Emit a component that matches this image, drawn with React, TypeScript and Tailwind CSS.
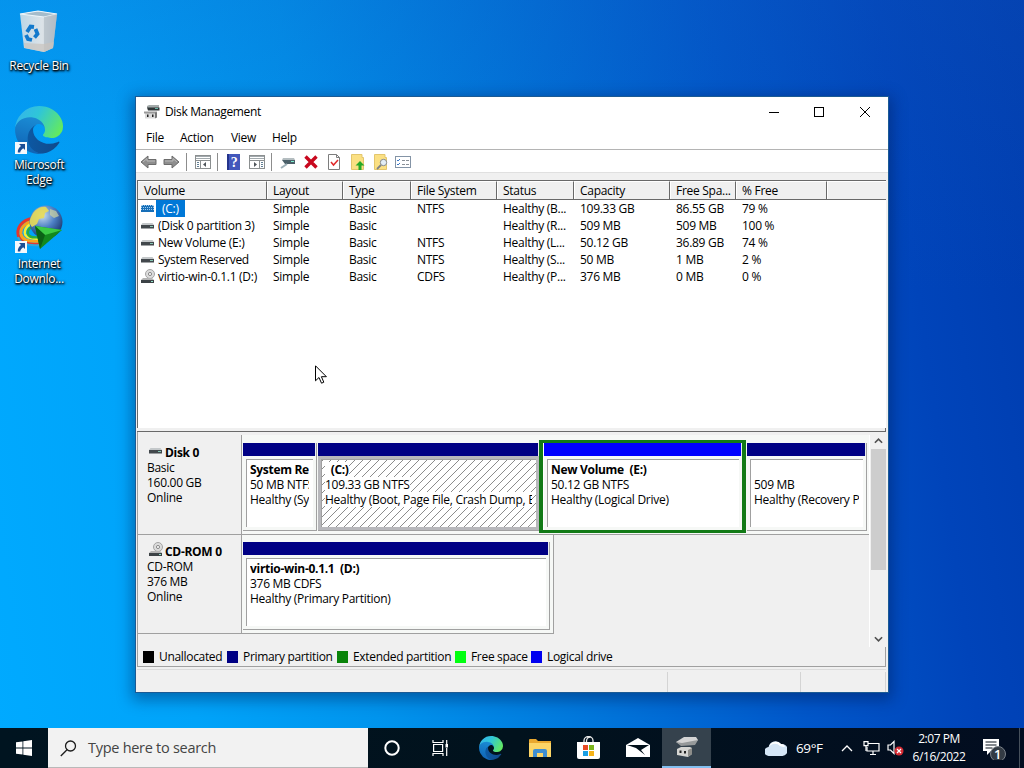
import type { ReactNode } from "react";
import clsx from "clsx";

interface Volume {
  name: string;
  layout: string;
  type: string;
  fs: string;
  status: string;
  capacity: string;
  free: string;
  percent: string;
  icon: "selected" | "disk" | "cd";
}

const volumes: Volume[] = [
  { name: "(C:)", layout: "Simple", type: "Basic", fs: "NTFS", status: "Healthy (B...", capacity: "109.33 GB", free: "86.55 GB", percent: "79 %", icon: "selected" },
  { name: "(Disk 0 partition 3)", layout: "Simple", type: "Basic", fs: "", status: "Healthy (R...", capacity: "509 MB", free: "509 MB", percent: "100 %", icon: "disk" },
  { name: "New Volume (E:)", layout: "Simple", type: "Basic", fs: "NTFS", status: "Healthy (L...", capacity: "50.12 GB", free: "36.89 GB", percent: "74 %", icon: "disk" },
  { name: "System Reserved", layout: "Simple", type: "Basic", fs: "NTFS", status: "Healthy (S...", capacity: "50 MB", free: "1 MB", percent: "2 %", icon: "disk" },
  { name: "virtio-win-0.1.1 (D:)", layout: "Simple", type: "Basic", fs: "CDFS", status: "Healthy (P...", capacity: "376 MB", free: "0 MB", percent: "0 %", icon: "cd" },
];

const columns = ["Volume", "Layout", "Type", "File System", "Status", "Capacity", "Free Spa...", "% Free", ""];

const gridCols = "grid grid-cols-[129px_76px_68px_86px_77px_96px_66px_91px_1fr]";

const legend = [
  { label: "Unallocated", color: "bg-black", width: "w-[84px]" },
  { label: "Primary partition", color: "bg-[#000084]", width: "w-[110px]" },
  { label: "Extended partition", color: "bg-[#0a840a]", width: "w-[118px]" },
  { label: "Free space", color: "bg-[#00ff10]", width: "w-[76px]" },
  { label: "Logical drive", color: "bg-[#0000f0]", width: "w-[90px]" },
];

const EdgeLogo = ({ id, className }: { id: string; className?: string }) => (
  <svg viewBox="0 0 256 256" className={className}>
    <defs>
      <linearGradient id={`${id}a`} x1="0" y1="0.5" x2="1" y2="0.6">
        <stop offset="0" stopColor="#0c59a4" />
        <stop offset="1" stopColor="#114a8b" />
      </linearGradient>
      <linearGradient id={`${id}b`} x1="0.6" y1="0" x2="0.4" y2="1">
        <stop offset="0" stopColor="#1b8ed6" />
        <stop offset="1" stopColor="#0f62b4" />
      </linearGradient>
      <linearGradient id={`${id}c`} x1="0" y1="0.3" x2="1" y2="0.7">
        <stop offset="0" stopColor="#35b5ea" />
        <stop offset="0.4" stopColor="#2fc6d8" />
        <stop offset="1" stopColor="#66eb5a" />
      </linearGradient>
    </defs>
    <path d="M231 190.500c-3.400 1.800-6.900 3.400-10.500 4.700a101 101 0 0 1-35.900 6.500c-47.300 0-88.500-32.500-88.500-74.300 0-11.400 6.400-22 16.400-27.400-42.800 1.800-53.800 46.400-53.800 72.500 0 74 68.100 81.400 82.800 81.400 7.900 0 19.800-2.300 27-4.600l1.300-.4a128 128 0 0 0 66.600-52.800 4 4 0 0 0-5.400-5.600Z" fill={`url(#${id}a)`} />
    <path d="M105.700 241.400a79.200 79.200 0 0 1-22.700-21.300 80.700 80.700 0 0 1 29.500-120c3.200-1.500 8.500-4.100 15.600-4 10.200.1 19.800 5 25.900 13.100 4 5.300 6.300 11.800 6.300 18.700 0-.2 24.500-79.600-80-79.600-43.900 0-80 41.600-80 78.200 0 19.300 4.500 38.400 12.500 56a128 128 0 0 0 156.400 67.100 75.500 75.500 0 0 1-62.800-8.100Z" fill={`url(#${id}b)`} />
    <path d="M152.300 148.900c-.9 1-3.400 2.500-3.400 5.600 0 2.600 1.700 5.200 4.800 7.300 14.400 10 41.500 8.700 41.600 8.700 10.700 0 21.100-2.900 30.300-8.300A61.400 61.400 0 0 0 256 109.200c.3-22.400-8-37.300-11.300-43.900C223.500 23.900 177.700 0 128 0A128 128 0 0 0 0 126.200c.5-36.500 36.800-66 80-66 3.500 0 23.500.3 42 10.100 16.300 8.600 24.900 18.900 30.800 29.200 6.200 10.700 7.300 24.100 7.300 29.500s-2.700 13.300-7.800 19.900Z" fill={`url(#${id}c)`} />
  </svg>
);

const ShortcutArrow = () => (
  <svg viewBox="0 0 12 12" className="absolute bottom-0 left-0 h-3 w-3">
    <rect width="12" height="12" fill="#f4f8fc" />
    <path d="M4 2h6v6L8.200 6.200C6.500 7.400 5.400 8.700 5.200 10.500H2.800C2.600 7.600 4 5.500 6 4Z" fill="#1c4f96" />
  </svg>
);

const RecycleBin = () => (
  <svg viewBox="0 0 40 44" className="h-11 w-10">
    <defs>
      <linearGradient id="bin" x1="0" x2="1">
        <stop offset="0" stopColor="#bcd6e6" />
        <stop offset="0.600" stopColor="#dce3e8" />
        <stop offset="1" stopColor="#a9b7c4" />
      </linearGradient>
    </defs>
    <path d="M1 5 19 2l19 3-4 34-9 4L5 39Z" fill="url(#bin)" />
    <path d="M1 5 19 2l19 3-13 3Z" fill="#a5bccb" stroke="#eef6fb" strokeWidth="1.200" />
    <path d="M25 8 38 5l-4 34-9 4Z" fill="#b4bdc6" opacity="0.700" />
    <path d="m5 34 .5 5L25 43l9-4 .8-6-10 2Z" fill="#c9c3bd" opacity="0.700" />
    <g fill="none" stroke="#1279cc" strokeWidth="3.800">
      <path d="m8 23 3.500-5.500 3.500.5" />
      <path d="m16.500 20 2 5-3 3.500" />
      <path d="M13 31 9 30l-2-4" />
    </g>
  </svg>
);

const DownloadGlobe = () => (
  <svg viewBox="0 0 48 46" className="h-[46px] w-12">
    <defs>
      <radialGradient id="globe" cx="0.4" cy="0.3" r="0.750">
        <stop offset="0" stopColor="#c9def0" />
        <stop offset="0.500" stopColor="#4c7fc4" />
        <stop offset="1" stopColor="#173065" />
      </radialGradient>
    </defs>
    <path d="M22 13C10 13 2 20 3 29c1 7 8 11 22 10" fill="none" stroke="#e9362c" strokeWidth="3" />
    <path d="M22 16c-10 0-17 6-16 13 1 6 8 8 19 7" fill="none" stroke="#f9a21b" strokeWidth="3" />
    <path d="M22 18c-8 0-13 5-12 11 1 4 7 5 15 5" fill="none" stroke="#f5ef33" strokeWidth="2.500" />
    <path d="M22 21c-6 0-10 3-9 8 1 3 5 4 12 3" fill="none" stroke="#2cae3e" strokeWidth="2.500" />
    <path d="M3 32c2 6 10 9 22 8" fill="none" stroke="#35a7d8" strokeWidth="2" />
    <circle cx="31" cy="17" r="16.500" fill="url(#globe)" />
    <path d="M17 10c3-6 9-9 14-8l3 4-4 2-1 5-5 1-2 5-5 3c-3-3-3-7 0-12Z" fill="#e9dc55" opacity="0.900" />
    <path d="m35 4 6 2 3 5-5 2-4-3Z" fill="#cfd4a0" opacity="0.700" />
    <path d="m20 21 27 4-22 19Z" fill="#13891e" />
    <path d="m20 21 27 4-17 5Z" fill="#3ccb45" />
    <path d="m20 21 10 9-5 14Z" fill="#0b6116" />
  </svg>
);

const DiskIcon = ({ kind, className }: { kind: Volume["icon"]; className?: string }) => (
  <svg viewBox="0 0 16 16" className={clsx("h-4 w-4 shrink-0", className)}>
    {kind === "cd" && (
      <>
        <circle cx="10" cy="5" r="4.500" fill="#dcdcdc" stroke="#a4a4a4" />
        <circle cx="10" cy="5" r="1.600" fill="#f4f4f4" stroke="#8c8c8c" />
        <path d="M3 9h9l2 2H1Z" fill="#b4b4b4" />
        <rect x="1" y="11" width="13" height="3" fill="#3c4246" />
        <rect x="11" y="12" width="2" height="1" fill="#8fe0c8" />
      </>
    )}
    {kind === "disk" && (
      <>
        <path d="M2.500 5h10l1.500 2H1Z" fill="#c4c8ca" />
        <rect x="1" y="7" width="13" height="3.500" fill="#42484c" />
        <rect x="10" y="8" width="3" height="1" fill="#86c7b4" />
      </>
    )}
    {kind === "selected" && (
      <>
        <path d="M2 4h11l1 2v5H1V6Z" fill="#176fb8" />
        <path d="M2 4.500h12M1 6.500h13M1 8.500h13" stroke="#9dccf0" strokeDasharray="1 1" />
      </>
    )}
  </svg>
);

const MgmtIcon = ({ className }: { className?: string }) => (
  <svg viewBox="0 0 16 16" className={className}>
    <path d="m3 2 2-1h10v3H3Z" fill="#a3aaaa" />
    <path d="M3 3.500h12.500v3H4Z" fill="#303638" />
    <rect x="11" y="4" width="3" height="1" fill="#67b7a6" />
    <path d="M1 9h10v5.500H1Z" fill="#dadada" />
    <path d="M0 7.500h13v2H0Z" fill="#9a9a9a" />
    <path d="M3 10.500h1.500v2.500H3Zm5 0h1.500v2.500H8Z" fill="#222" />
    <path d="M11 8.500h2v5l-2 1Z" fill="#777" />
  </svg>
);

const PaneIcon = ({ flip }: { flip?: boolean }) => (
  <svg viewBox="0 0 16 14" className="h-3.5 w-4">
    <rect x="0.500" y="0.500" width="15" height="13" fill="#fff" stroke="#8b8f90" />
    <path d="M1 1.500h14M1 3.500h14" stroke="#a2aaae" />
    <path d={flip ? "M10.500 5v8.500M1 5.500h14" : "M5.500 5v8.500M1 5.500h14"} stroke="#8b8f90" />
    <path d={flip ? "M12 7.500h2M12 9.500h2M12 11.500h2" : "M2 7.500h2M2 9.500h2M2 11.500h2"} stroke="#617f95" />
    <path d={flip ? "m5 7 3 2.500-3 2.500Z" : "m11 7-3 2.500 3 2.500Z"} fill="#4f555a" />
  </svg>
);

const ArrowIcon = ({ right }: { right?: boolean }) => (
  <svg viewBox="0 0 17 14" className={clsx("h-3.5 w-[17px]", right && "-scale-x-100")}>
    <path d="m1 7 7-6v3.500h8v5H8V13Z" fill="#8e8e8e" stroke="#6c6c6c" strokeLinejoin="round" />
    <path d="m3 7 4-3.500V6h8" fill="none" stroke="#b9b9b9" />
  </svg>
);

const Separator = () => <div className="h-[18px] w-px bg-[#8d8d8d]" />;

const Toolbar = () => (
  <div className="flex h-[23px] shrink-0 items-center border-t border-[#b4b4b4] bg-white pl-[4px] pt-[2px]">
    <ArrowIcon />
    <div className="w-[6px]" />
    <ArrowIcon right />
    <div className="w-[6px]" />
    <Separator />
    <div className="w-[8px]" />
    <PaneIcon />
    <div className="w-[6px]" />
    <Separator />
    <div className="w-[9px]" />
    <svg viewBox="0 0 13 16" className="h-4 w-[13px]">
      <rect width="13" height="16" fill="#4357bb" />
      <rect width="2" height="16" fill="#24348c" />
      <text x="7" y="13" textAnchor="middle" className="fill-white font-['Liberation_Serif',serif] text-[14px] font-bold">?</text>
    </svg>
    <div className="w-[9px]" />
    <PaneIcon flip />
    <div className="w-[6px]" />
    <Separator />
    <div className="w-[8px]" />
    <svg viewBox="0 0 16 14" className="h-3.5 w-4">
      <path d="M3 3h11l1 2H2Z" fill="#b4bdc0" />
      <path d="M2 5h13v4H5Z" fill="#4b6069" />
      <path d="M11 6h3v1h-3Z" fill="#7cf0cf" />
      <path d="m1 13 6-4" stroke="#9db0b8" strokeWidth="2" />
    </svg>
    <div className="w-[8px]" />
    <svg viewBox="0 0 14 14" className="h-3.5 w-3.5">
      <path d="m1.500 1.500 11 11m0-11-11 11" stroke="#c8081e" strokeWidth="3.400" />
    </svg>
    <div className="w-[10px]" />
    <svg viewBox="0 0 12 16" className="h-4 w-3">
      <path d="M.5.5h8l3 3v12H.5Z" fill="#fff" stroke="#7d7d7d" />
      <path d="M8.500.5v3h3" fill="none" stroke="#7d7d7d" />
      <path d="m3 8 2.500 3L10 6" fill="none" stroke="#e02a2a" strokeWidth="1.500" />
    </svg>
    <div className="w-[11px]" />
    <svg viewBox="0 0 14 16" className="h-4 w-3.5">
      <path d="M.5.5h10.500v3h1.500v12H.5Z" fill="#fbe083" stroke="#e3c66c" />
      <path d="m9 7 4.500 4.500h-3V16h-3v-4.500h-3Z" fill="#27a927" />
    </svg>
    <div className="w-[9px]" />
    <svg viewBox="0 0 14 16" className="h-4 w-3.5">
      <path d="M.5.5h10.500v3h1.500v12H.5Z" fill="#fbe083" stroke="#e3c66c" />
      <circle cx="9.500" cy="8.500" r="3.200" fill="#e2edf5" stroke="#84898e" />
      <path d="m7 11-4 4" stroke="#7f8387" strokeWidth="1.800" />
    </svg>
    <div className="w-[7px]" />
    <svg viewBox="0 0 16 12" className="h-3 w-4">
      <rect x="0.500" y="0.500" width="15" height="11" fill="#fff" stroke="#8494a6" />
      <path d="m2 4 1 1 2-2M2 8l1 1 2-2" fill="none" stroke="#3c77c4" />
      <path d="M7 4.500h3m1 0h3M7 8.500h3m1 0h3" stroke="#8a9097" />
    </svg>
  </div>
);

const VolumeList = () => (
  <div className="h-[248px] border-l border-t border-[#696969] bg-white">
    <div className={clsx(gridCols, "h-[19px] border-b border-[#696969] bg-[#f0f0f0]")}>
      {columns.map((column, i) => (
        <div
          key={i}
          className={clsx(
            "overflow-hidden whitespace-nowrap border-t border-t-white leading-[17px]",
            i === 0 ? "pl-[6px]" : "border-l border-l-white pl-[5px]",
            i < columns.length - 1 && "border-r border-r-[#696969]"
          )}
        >
          {column}
        </div>
      ))}
    </div>
    {volumes.map((v) => (
      <div key={v.name} className={clsx(gridCols, "h-[17px] leading-[17px] *:whitespace-nowrap")}>
        <div className="flex items-center pl-[2px]">
          <DiskIcon kind={v.icon} />
          <span className={clsx(v.icon === "selected" ? "bg-[#0078d7] pl-[6px] pr-[6px] text-white" : "pl-[2px]")}>{v.name}</span>
        </div>
        <span className="pl-[6px]">{v.layout}</span>
        <span className="pl-[6px]">{v.type}</span>
        <span className="pl-[6px]">{v.fs}</span>
        <span className="pl-[6px]">{v.status}</span>
        <span className="pl-[6px]">{v.capacity}</span>
        <span className="pl-[6px]">{v.free}</span>
        <span className="pl-[6px]">{v.percent}</span>
      </div>
    ))}
  </div>
);

interface PartitionProps {
  className?: string;
  bar?: string;
  lines: string[];
  selected?: boolean;
}

const Partition = ({ className, bar = "bg-[#000084]", lines, selected }: PartitionProps) => (
  <div className={clsx("flex shrink-0 flex-col border-[#a0a0a0]", className)}>
    <div className={clsx("h-[13px] shrink-0 border-r border-[#e8eef0]", bar)} />
    <div className={clsx("flex min-h-0 flex-1 p-[3px]", selected ? "bg-[#b8b8bc]" : "bg-[#f6f8f6]")}>
      <div
        className={clsx(
          "min-w-0 flex-1 overflow-hidden border-l border-t border-[#a0a0a0] bg-white pl-[3px] pr-[4px] pt-[2px] leading-[15px]",
          selected && "bg-[repeating-linear-gradient(135deg,#8c8c8c_0_0.8px,transparent_0.8px_5.66px)]"
        )}
      >
        {lines.map((line, i) => (
          <div
            key={i}
            className={clsx("h-[15px] max-w-full overflow-hidden whitespace-pre", selected && "w-fit bg-white", i === 0 && "font-bold tracking-[-0.3px]")}
          >
            {line}
          </div>
        ))}
      </div>
    </div>
  </div>
);

const DiskLabel = ({ name, lines, icon, className }: { name: string; lines: string[]; icon: Volume["icon"]; className: string }) => (
  <div className={clsx("w-[104px] shrink-0 border-b border-r border-[#a0a0a0] pl-[9px] leading-[15px]", className)}>
    <div className="flex h-[15px] items-center">
      <DiskIcon kind={icon} className="ml-[1px] -mt-[4px]" />
      <span className="ml-px font-bold tracking-[-0.3px]">{name}</span>
    </div>
    {lines.map((line) => (
      <div key={line}>{line}</div>
    ))}
  </div>
);

const DiskView = () => (
  <div className="flex h-[212px] border-l border-[#a0a0a0]">
    <div className="w-[731px]">
      <div className="flex h-[100px]">
        <DiskLabel name="Disk 0" lines={["Basic", "160.00 GB", "Online"]} icon="disk" className="pt-[10px]" />
        <div className="flex flex-1 items-start border-b border-[#a0a0a0] bg-[#f6f8f6] pl-px pt-[8px]">
          <Partition className="h-[88px] w-[74px] border-r border-b" lines={["System Re", "50 MB NTFS", "Healthy (Sy"]} />
          <Partition className="ml-px h-[88px] w-[221px] border-b" lines={["  (C:)", "109.33 GB NTFS", "Healthy (Boot, Page File, Crash Dump, B"]} selected />
          <div className="-mt-[3px] h-[93px] w-[207px] shrink-0 border-x-4 border-y-[3px] border-[#127a16]">
            <Partition className="h-[87px] border-l border-l-white" bar="bg-[#0000ff]" lines={["New Volume  (E:)", "50.12 GB NTFS", "Healthy (Logical Drive)"]} />
          </div>
          <Partition className="ml-px h-[88px] w-[120px] border-r border-b" lines={["", "509 MB", "Healthy (Recovery P"]} />
        </div>
      </div>
      <div className="flex h-[99px]">
        <DiskLabel name="CD-ROM 0" lines={["CD-ROM", "376 MB", "Online"]} icon="cd" className="pt-[9px]" />
        <div className="w-[312px] border-b border-r border-[#a0a0a0] bg-[#f6f8f6] pl-px pt-[7px]">
          <Partition className="h-[88px] w-[307px] border-r border-b" lines={["virtio-win-0.1.1  (D:)", "376 MB CDFS", "Healthy (Primary Partition)"]} />
        </div>
      </div>
    </div>
    <div className="flex w-[17px] flex-col items-center border-l border-white bg-[#f0f0f0]">
      <svg viewBox="0 0 10 6" className="mt-[3px] h-[6px] w-[9px]">
        <path d="m1 5 4-4 4 4" fill="none" stroke="#505050" strokeWidth="1.800" />
      </svg>
      <div className="mt-[5px] h-[121px] w-[15px] bg-[#cdcdcd]" />
      <svg viewBox="0 0 10 6" className="mb-[5px] mt-auto h-[6px] w-[9px]">
        <path d="m1 1 4 4 4-4" fill="none" stroke="#505050" strokeWidth="1.800" />
      </svg>
    </div>
  </div>
);

const DiskManagement = () => (
  <div className="absolute left-[135px] top-[96px] flex h-[597px] w-[754px] flex-col border border-[#1b5a94] bg-[#f0f0f0] text-[12px] tracking-[-0.28px] text-black shadow-[0_4px_14px_3px_rgba(0,20,70,0.4)]">
    <div className="flex h-[30px] shrink-0 items-center bg-white pl-[8px]">
      <MgmtIcon className="h-4 w-4" />
      <span className="ml-[5px] flex-1 tracking-[-0.35px]">Disk Management</span>
      <svg viewBox="0 0 104 12" className="mr-[16px] h-3 w-[104px]" fill="none" stroke="#000">
        <path d="M1 6.500h10" />
        <rect x="46.500" y="1.500" width="9" height="9" />
        <path d="m92 1 10 10M102 1 92 11" />
      </svg>
    </div>
    <div className="flex h-[22px] shrink-0 items-center bg-white pl-[10px]">
      <span className="w-[34px]">File</span>
      <span className="w-[51px]">Action</span>
      <span className="w-[41px]">View</span>
      <span>Help</span>
    </div>
    <Toolbar />
    <div className="h-[8px] shrink-0 border-t border-[#e0e0e0]" />
    <div className="flex flex-1 flex-col pl-px pr-[2px]">
      <VolumeList />
      <div className="h-[4px] border-b border-r border-[#696969]" />
      <div className="h-[3px] border-l border-[#a0a0a0]" />
      <DiskView />
      <div className="flex h-[20px] items-center border-b border-l border-r border-[#a0a0a0] pl-[5px] tracking-[-0.32px]">
        {legend.map((item) => (
          <div key={item.label} className={clsx("flex shrink-0 items-center whitespace-nowrap", item.width)}>
            <span className={clsx("mr-[5px] h-[12px] w-[11px] shrink-0", item.color)} />
            {item.label}
          </div>
        ))}
      </div>
      <div className="mt-[2px] flex flex-1 border-t border-[#dcdcdc] pt-[2px]">
        <div className="w-[531px] border-r border-[#d4d4d4]" />
        <div className="w-[133px] border-r border-[#d4d4d4]" />
        <div className="flex-1 border-r border-[#d4d4d4]" />
      </div>
    </div>
  </div>
);

const DesktopIcon = ({ children, label, className }: { children: ReactNode; label: string; className: string }) => (
  <div className={clsx("flex w-[78px] flex-col items-center", className)}>
    {children}
    <span className="whitespace-pre text-center text-[12px] leading-[15px] tracking-[-0.3px] text-white [text-shadow:0_1px_2px_#000,1px_1px_2px_#000,1px_1px_3px_#001830]">{label}</span>
  </div>
);

const TaskButton = ({ children, className }: { children: ReactNode; className?: string }) => (
  <div className={clsx("flex h-10 w-[49px] shrink-0 items-center justify-center", className)}>{children}</div>
);

const Taskbar = () => (
  <div className="flex h-10 shrink-0 items-center bg-linear-to-r from-[#001420] via-[#01121d] to-[#020d20] text-white">
    <div className="flex w-12 justify-center">
      <svg viewBox="0 0 16 16" className="h-4 w-4" fill="#fff">
        <path d="m0 2.300 6.500-.9v6.200H0ZM7.300 1.300 16 0v7.600H7.300ZM0 8.400h6.500v6.200L0 13.700Zm7.300 0H16V16l-8.700-1.200Z" />
      </svg>
    </div>
    <div className="flex h-10 w-80 items-center border-b border-[#b9b9b9] bg-[#f2f2f2] pl-3 pt-px">
      <svg viewBox="0 0 17 17" className="h-[17px] w-[17px]" fill="none" stroke="#1c1c1c" strokeWidth="1.300">
        <circle cx="10.500" cy="6" r="5" />
        <path d="M7 9.700.8 16" />
      </svg>
      <span className="ml-[11px] text-[14.5px] tracking-[-0.28px] text-[#444]">Type here to search</span>
    </div>
    <TaskButton className="w-12!">
      <svg viewBox="0 0 16 16" className="h-4 w-4">
        <circle cx="8" cy="8" r="6.700" fill="none" stroke="#fff" strokeWidth="2" />
      </svg>
    </TaskButton>
    <TaskButton className="w-12!">
      <svg viewBox="0 0 17 16" className="h-4 w-[17px]" fill="none" stroke="#fff" strokeWidth="1.200">
        <path d="M1 0v2.500h10V0M1 16v-2.500h10V16M1.600 4.500h9v7h-9ZM14.700 0v4m0 4v8" />
        <rect x="13.500" y="4" width="2.500" height="3.500" fill="#fff" stroke="none" />
      </svg>
    </TaskButton>
    <TaskButton className="w-[51px]! pl-[3px]">
      <EdgeLogo id="task" className="h-6 w-6" />
    </TaskButton>
    <TaskButton>
      <svg viewBox="0 0 22 18" className="h-[18px] w-[22px]">
        <path d="M0 1q0-1 1-1h6l2 2h13v16H0Z" fill="#e9a82f" />
        <path d="M0 4h22v14H0Z" fill="#fcd567" />
        <path d="M4 18v-6q0-2 2-2h10q2 0 2 2v6h-4v-4H8v4Z" fill="#3f8ed0" />
      </svg>
    </TaskButton>
    <TaskButton>
      <svg viewBox="0 0 23 24" className="h-6 w-[23px]">
        <path d="M7 7V4.500a4.500 4 0 0 1 9 0V7M9.500 7V5a4 4 0 0 1 4-4" fill="none" stroke="#e7e7e7" strokeWidth="1.300" />
        <path d="M0 6h23v15q0 2-2 2H2q-2 0-2-2Z" fill="#fff" />
        <path d="M6 9h5v5H6Z" fill="#e84a24" />
        <path d="M12 9h5v5h-5Z" fill="#7cb51c" />
        <path d="M6 15h5v5H6Z" fill="#1a9fe4" />
        <path d="M12 15h5v5h-5Z" fill="#f6b319" />
      </svg>
    </TaskButton>
    <TaskButton>
      <svg viewBox="0 0 24 20" className="h-5 w-6">
        <path d="m0 7 12-7 12 7v12H0Z" fill="#fff" />
        <path d="M1 7h22l-8 5 4 5-9-7Z" fill="#010f19" />
      </svg>
    </TaskButton>
    <TaskButton className="border-b-2 border-[#83bff0] bg-[#35424d]">
      <svg viewBox="0 0 24 22" className="h-[22px] w-6">
        <path d="m1 6 8-5h12l2 3-4 5H6Z" fill="#d4d4d4" />
        <path d="m1 6 6 1 16-3-3 5-14 1Z" fill="#96999a" />
        <path d="m2 13 4-2h9l2 1v6l-4 3-11-2Z" fill="#d6d6d3" />
        <path d="m13 14 4-2v6l-4 3Z" fill="#8e8e8a" />
        <path d="M4.500 14.500h2V17h-2Zm4.500.5h2v2.500H9Z" fill="#222" />
      </svg>
    </TaskButton>
    <div className="flex-1" />
    <svg viewBox="0 0 22 16" className="h-4 w-[22px]">
      <path d="M4 16a4.500 4.500 0 0 1-.4-9A7 7 0 0 1 16 4a5.500 5.500 0 0 1 1.500 12Z" fill="#d5e6f6" />
      <path d="M3 9a7 7 0 0 1 12-3q2 1 5 1-1-3-4-3A7 7 0 0 0 4 7Z" fill="#fff" />
    </svg>
    <span className="ml-[9px] w-[45px] text-[13.5px] tracking-[-0.4px]">69°F</span>
    <svg viewBox="0 0 12 8" className="h-2 w-3" fill="none" stroke="#fff" strokeWidth="1.300">
      <path d="m1 7 5-5 5 5" />
    </svg>
    <svg viewBox="0 0 17 14" className="ml-[10px] h-3.5 w-[17px]" fill="none" stroke="#fff" strokeWidth="1.200">
      <path d="M5 2.500h11v7.500H4V6M7 13.500h6M10 10v3" />
      <path d="M1 .6h4v4H1ZM3 5v5" />
    </svg>
    <svg viewBox="0 0 17 16" className="ml-[7px] h-4 w-[17px]">
      <path d="M1 5h2.500L7 1.500v12L3.500 10H1Z" fill="none" stroke="#fff" strokeWidth="1.200" />
      <circle cx="12" cy="11" r="4.500" fill="#d52b33" />
      <path d="m10 9 4 4m0-4-4 4" stroke="#fff" strokeWidth="1.200" />
    </svg>
    <div className="ml-[7px] w-[56px] text-center text-[12px] leading-[18px] tracking-[-0.45px]">
      <div>2:07 PM</div>
      <div>6/16/2022</div>
    </div>
    <div className="relative ml-[15px] mr-[13px] h-6 w-6">
      <svg viewBox="0 0 24 24" className="h-6 w-6">
        <path d="M1 3h16v12h-8l-4 4v-4H1Z" fill="#fff" />
        <path d="M3.500 6h11M3.500 9h11M3.500 12h7" stroke="#09131d" strokeWidth="1.200" />
        <circle cx="16" cy="18" r="7.500" fill="#333b44" stroke="#7b828a" />
      </svg>
      <span className="absolute left-[12px] top-[10px] text-[13px] font-semibold leading-4">1</span>
    </div>
    <div className="h-10 w-px bg-[#46505b]" />
    <div className="w-[4px]" />
  </div>
);

export default function App() {
  return (
    <div className="relative flex h-[768px] w-[1024px] flex-col overflow-hidden bg-[linear-gradient(180deg,rgba(20,90,190,0.24)_0%,rgba(10,80,190,0)_38%),linear-gradient(82deg,#00aaff_0%,#00a3f9_18%,#0094ed_34%,#0074da_54%,#0056c9_72%,#0044ba_87%,#003cae_100%)] font-['Open_Sans','Noto_Sans',sans-serif]">
      <div className="flex flex-1 flex-col">
        <DesktopIcon label="Recycle Bin" className="h-[95px] pt-[9px]">
          <RecycleBin />
          <div className="h-[5px]" />
        </DesktopIcon>
        <DesktopIcon label={"Microsoft\nEdge"} className="h-[100px] pt-[11px]">
          <div className="relative h-12 w-12">
            <EdgeLogo id="desk" className="h-12 w-12" />
            <ShortcutArrow />
          </div>
          <div className="h-[3px]" />
        </DesktopIcon>
        <DesktopIcon label={"Internet\nDownlo..."} className="h-[100px] pt-[10px]">
          <div className="relative h-12 w-12">
            <DownloadGlobe />
            <ShortcutArrow />
          </div>
          <div className="h-[3px]" />
        </DesktopIcon>
      </div>

      <DiskManagement />

      {/* Mouse pointer */}
      <svg viewBox="0 0 12 19" className="absolute left-[315px] top-[365px] h-[19px] w-3">
        <path d="M.5.8v15l3.500-3.300 2.500 5.700 2.300-1-2.400-5.500h5Z" fill="#fff" stroke="#000" />
      </svg>

      <Taskbar />
    </div>
  );
}
